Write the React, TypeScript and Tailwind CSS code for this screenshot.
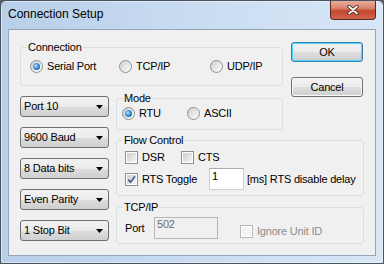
import React from "react";

const Radio = ({ checked }: { checked?: boolean }) => (
  <div className="w-[13px] h-[13px] shrink-0 rounded-full border border-[#8e8f8f] bg-[linear-gradient(135deg,#cfcfcf,#fdfdfd)] flex items-center justify-center">
    {checked && (
      <div className="w-[7px] h-[7px] rounded-full bg-[radial-gradient(circle_at_40%_40%,#b4e6ff_0%,#3d8fdc_45%,#0c468c_100%)]" />
    )}
  </div>
);

const Check = ({ checked, disabled }: { checked?: boolean; disabled?: boolean }) => (
  <div
    className={
      "w-[13px] h-[13px] shrink-0 border bg-white p-[1px] " +
      (disabled ? "border-[#b8b8b8]" : "border-[#8e8f8f]")
    }
  >
    <div
      className={
        "w-full h-full flex items-center justify-center " +
        (disabled ? "bg-[#f4f4f4]" : "bg-[linear-gradient(135deg,#cdcdcd,#f7f7f7)]")
      }
    >
      {checked && (
        <svg width="9" height="9" viewBox="0 0 9 9">
          <path d="M1.2 4.6 L3.5 7.2 L8 1.2" stroke="#4a5b8f" strokeWidth="1.7" fill="none" />
        </svg>
      )}
    </div>
  </div>
);

const Combo = ({ label }: { label: string }) => (
  <div className="h-[21px] w-[89px] rounded-[3px] border border-[#707070] bg-[linear-gradient(to_bottom,#f2f2f2_0%,#ebebeb_50%,#dddddd_51%,#cfcfcf_100%)] flex items-center justify-between pl-[3px] pr-[5px]">
    <span>{label}</span>
    <svg width="7" height="4" viewBox="0 0 7 4">
      <path d="M0 0 H7 L3.5 4 Z" fill="#000" />
    </svg>
  </div>
);

const Button = ({ label, def }: { label: string; def?: boolean }) => (
  <div
    className={
      "h-[20px] w-[72px] rounded-[3px] border flex items-center justify-center bg-[linear-gradient(to_bottom,#f2f2f2_0%,#ebebeb_50%,#dddddd_51%,#cfcfcf_100%)] " +
      (def ? "border-[#3c7fb1] shadow-[inset_0_0_0_1px_#4fd4fb]" : "border-[#707070] shadow-[inset_0_0_0_1px_#fafafa]")
    }
  >
    {label}
  </div>
);

const Legend = ({ children }: { children: React.ReactNode }) => (
  <legend className="ml-[6px] px-[1px] leading-[13px]">{children}</legend>
);

export default function App() {
  return (
    <div className="w-[384px] h-[264px] bg-[#5b6068] font-['Liberation_Sans',Arial,sans-serif]">
      <div className="w-full h-full flex flex-col rounded-t-[6px] rounded-b-[2px] border border-[#48535f] bg-[linear-gradient(to_right,#b7cfe9,#c9dcf1_50%,#d8e7f7)] shadow-[inset_0_0_0_1px_rgba(255,255,255,0.45)]">
        <div className="h-[28px] flex justify-between items-start">
          <div className="pl-[7px] pt-[6px] text-[12px] leading-[15px] text-black">Connection Setup</div>
          <div className="mr-[7px] w-[46px] h-[19px] rounded-b-[4px] border border-t-0 border-[#5a2a22] bg-[linear-gradient(to_bottom,#e9ab9c_0%,#d98570_40%,#c4462e_55%,#d2654d_100%)] flex items-center justify-center">
            <svg width="12" height="10" viewBox="0 0 12 10">
              <path d="M2 1.5 L10 8.5 M10 1.5 L2 8.5" stroke="#3a1a14" strokeWidth="3.4" strokeLinecap="round" />
              <path d="M2 1.5 L10 8.5 M10 1.5 L2 8.5" stroke="#ffffff" strokeWidth="1.8" strokeLinecap="round" />
            </svg>
          </div>
        </div>
        <div className="mx-[7px] h-[227px] border border-[#95a4b5] bg-[#f0f0f0] text-[11px] leading-[13px] tracking-[-0.2px] text-black">
          <div className="grid grid-cols-[89px_7px_167px_8px_73px] items-start mt-[11px] ml-[11px]">
            <fieldset className="col-start-1 col-span-3 row-start-1 h-[45px] min-w-0 rounded-[3px] border border-[#d5dfe5]">
              <Legend>Connection</Legend>
              <div className="flex items-center h-[13px] mt-[6px] ml-[9px]">
                <div className="w-[89px] flex items-center gap-[4px]">
                  <Radio checked />
                  <span>Serial Port</span>
                </div>
                <div className="w-[91px] flex items-center gap-[4px]">
                  <Radio />
                  <span>TCP/IP</span>
                </div>
                <div className="flex items-center gap-[4px]">
                  <Radio />
                  <span>UDP/IP</span>
                </div>
              </div>
            </fieldset>

            <div className="col-start-5 row-start-1 row-span-2 flex flex-col mt-[1px]">
              <Button label="OK" def />
              <div className="mt-[15px]">
                <Button label="Cancel" />
              </div>
            </div>

            <div className="col-start-1 row-start-2 row-span-3 flex flex-col gap-[10px] mt-[10px]">
              <Combo label="Port 10" />
              <Combo label="9600 Baud" />
              <Combo label="8 Data bits" />
              <Combo label="Even Parity" />
              <Combo label="1 Stop Bit" />
            </div>

            <fieldset className="col-start-3 row-start-2 mt-[6px] h-[38px] min-w-0 rounded-[3px] border border-[#d5dfe5]">
              <Legend>Mode</Legend>
              <div className="flex items-center h-[13px] mt-[2px] ml-[5px]">
                <div className="w-[65px] flex items-center gap-[4px]">
                  <Radio checked />
                  <span>RTU</span>
                </div>
                <div className="flex items-center gap-[4px]">
                  <Radio />
                  <span>ASCII</span>
                </div>
              </div>
            </fieldset>

            <fieldset className="col-start-3 col-span-3 row-start-3 mt-[4px] h-[62px] min-w-0 rounded-[3px] border border-[#d5dfe5]">
              <Legend>Flow Control</Legend>
              <div className="flex items-center h-[13px] mt-[4px] ml-[8px]">
                <div className="w-[56px] flex items-center gap-[4px]">
                  <Check />
                  <span>DSR</span>
                </div>
                <div className="flex items-center gap-[4px]">
                  <Check />
                  <span>CTS</span>
                </div>
              </div>
              <div className="flex items-center h-[22px] mt-[4px] ml-[8px]">
                <div className="w-[84px] flex items-center gap-[4px]">
                  <Check checked />
                  <span>RTS Toggle</span>
                </div>
                <div className="w-[35px] h-[22px] bg-white border border-[#cdd0d6] border-t-[#abadb3] pl-[2px] pt-[1px]">1</div>
                <span className="ml-[3px]">[ms] RTS disable delay</span>
              </div>
            </fieldset>

            <fieldset className="col-start-3 col-span-3 row-start-4 mt-[5px] h-[43px] min-w-0 rounded-[3px] border border-[#d5dfe5]">
              <Legend>TCP/IP</Legend>
              <div className="flex items-start h-[22px] mt-[3px] ml-[8px]">
                <span className="w-[29px] mt-[5px]">Port</span>
                <div className="w-[64px] h-[22px] border border-[#b5b5b5] bg-[#f0f0f0] pl-[2px] text-[#6d6d6d]">502</div>
                <div className="ml-[22px] mt-[8px] flex items-center gap-[4px] text-[#8d8d8d]">
                  <Check disabled />
                  <span>Ignore Unit ID</span>
                </div>
              </div>
            </fieldset>
          </div>
        </div>
      </div>
    </div>
  );
}
